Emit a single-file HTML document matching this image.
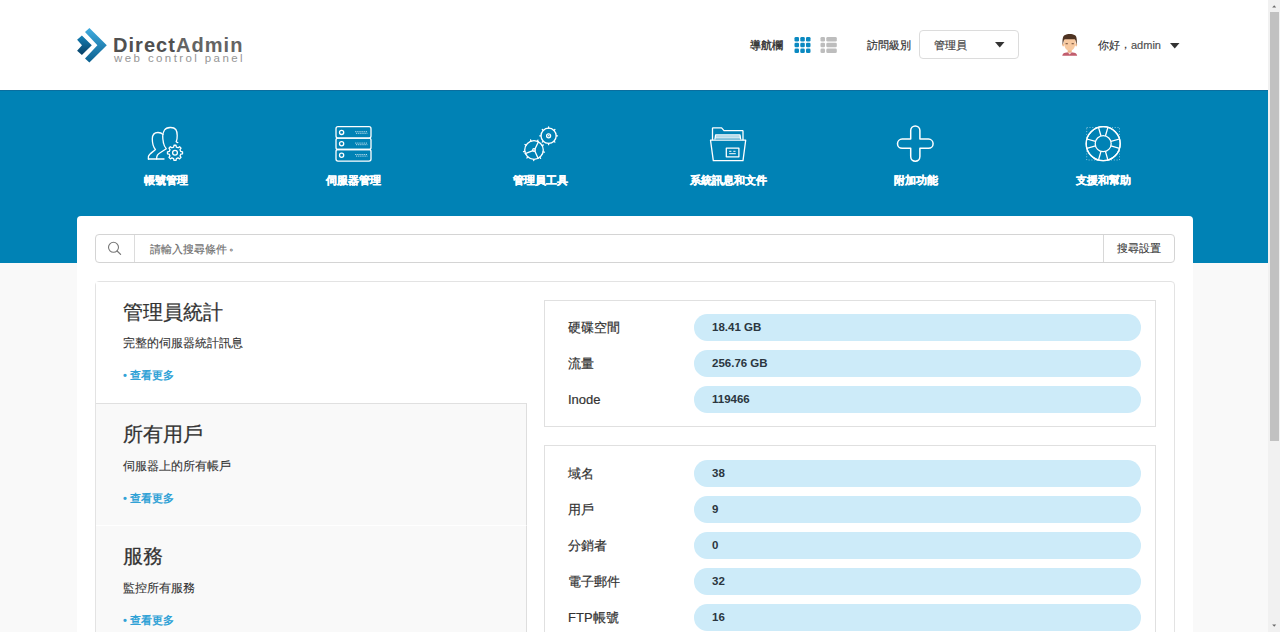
<!DOCTYPE html>
<html><head><meta charset="utf-8">
<style>
*{box-sizing:border-box;margin:0;padding:0}
html,body{width:1280px;height:632px;overflow:hidden}
body{font-family:"Liberation Sans",sans-serif;background:#f9f9f9;position:relative;color:#333}
.a{position:absolute;white-space:nowrap}
#header{position:absolute;left:0;top:0;width:1268px;height:90px;background:#fff}
#blue{position:absolute;left:0;top:90px;width:1268px;height:173px;background:#0082b5}
#track{position:absolute;left:1268px;top:0;width:12px;height:632px;background:#f1f1f1}
#thumb{position:absolute;left:1270px;top:11.5px;width:8.6px;height:429px;background:#c1c1c1}
.ico{position:absolute;top:118px;width:50px;height:50px}
.ico svg{display:block}
.nl{position:absolute;top:173px;width:180px;margin-left:-90px;text-align:center;color:#fff;font-weight:bold;font-size:11px;line-height:14px;-webkit-text-stroke:0.3px #fff}
#card{position:absolute;left:77px;top:216px;width:1116px;height:430px;background:#fff;border-radius:4px}
#search{position:absolute;left:95px;top:234px;width:1080px;height:29px;border:1px solid #d4d4d4;border-radius:4px;background:#fff}
#stats{position:absolute;left:95px;top:281px;width:1080px;height:400px;border:1px solid #e3e3e3;border-radius:4px;background:#fff}
.sec{position:absolute;left:96px;width:431px}
.sec h2{position:absolute;left:26.5px;font-size:20px;font-weight:normal;color:#333;line-height:24px;white-space:nowrap;-webkit-text-stroke:0.25px #333}
.sec p{position:absolute;left:26.5px;font-size:12px;color:#333;line-height:14px;white-space:nowrap;-webkit-text-stroke:0.1px #333}
.sec a{position:absolute;left:27px;font-size:11px;color:#31a2d6;font-weight:bold;text-decoration:none;line-height:14px;white-space:nowrap}
.box{position:absolute;left:544px;width:612px;border:1px solid #e0e0e0;background:#fff}
.k{position:absolute;left:568px;margin-top:1px;font-size:13px;color:#333;line-height:26px;white-space:nowrap;-webkit-text-stroke:0.2px #333}
.v{position:absolute;left:694px;width:446.6px;height:26.5px;margin-top:0.3px;border-radius:13.25px;background:#cdebf9;line-height:26.5px;padding-left:18px;font-size:11.5px;font-weight:bold;color:#2b3640;white-space:nowrap}
</style></head><body>
<div id="header"></div>
<div id="blue"></div><div class="a" style="left:0;top:90px;width:1268px;height:1px;background:#0a6e9f"></div>
<div id="track"></div><div id="thumb"></div>
<svg class="a" style="left:1268px;top:0" width="12" height="632"><path d="M4.2 7.5L6.2 5.3L8.2 7.5Z" fill="#6a6a6a"/><path d="M4.2 624.5L6.2 626.7L8.2 624.5Z" fill="#6a6a6a"/></svg>

<!-- logo -->
<svg class="a" style="left:70px;top:20px" width="45" height="50" viewBox="0 0 45 50">
  <defs>
    <linearGradient id="g1" x1="0" y1="0" x2="0" y2="1"><stop offset="0" stop-color="#41ade0"/><stop offset="1" stop-color="#0b5f8e"/></linearGradient>
    <linearGradient id="g2" x1="0" y1="0" x2="0" y2="1"><stop offset="0" stop-color="#1582b8"/><stop offset="1" stop-color="#083f64"/></linearGradient>
  </defs>
  <path d="M19.4 8 L36.8 25.2 L19.4 42.6 L15 38.6 L27.4 25.2 L15 11.9 Z" fill="url(#g1)"/>
  <path d="M11.9 15.4 L21.8 25.2 L11.9 35.1 L7.1 30.8 L12 25.2 L7.1 19.8 Z" fill="url(#g2)"/>
</svg>
<div class="a" style="left:113px;top:33px;font-size:20px;font-weight:bold;color:#505050;line-height:24px;letter-spacing:1.05px">Direct<span style="color:#646464">Admin</span></div>
<div class="a" style="left:114px;top:52px;font-size:11.5px;color:#969696;line-height:13px;letter-spacing:2.4px">web control panel</div>

<!-- header right -->
<div class="a" style="left:750px;top:38px;font-size:11px;color:#333;line-height:14px;-webkit-text-stroke:0.4px #333">導航欄</div>
<svg class="a" style="left:794px;top:37px" width="18" height="17">
  <g fill="#0a89c1">
    <rect x="0.5" y="0" width="4.5" height="4.5" rx="1.3"/><rect x="6.3" y="0" width="4.5" height="4.5" rx="1.3"/><rect x="12" y="0" width="4.5" height="4.5" rx="1.3"/>
    <rect x="0.5" y="5.8" width="4.5" height="4.5" rx="1.3"/><rect x="6.3" y="5.8" width="4.5" height="4.5" rx="1.3"/><rect x="12" y="5.8" width="4.5" height="4.5" rx="1.3"/>
    <rect x="0.5" y="11.6" width="4.5" height="4.5" rx="1.3"/><rect x="6.3" y="11.6" width="4.5" height="4.5" rx="1.3"/><rect x="12" y="11.6" width="4.5" height="4.5" rx="1.3"/>
  </g>
</svg>
<svg class="a" style="left:820px;top:37px" width="18" height="17">
  <g fill="#bdbdbd">
    <rect x="0.5" y="0" width="4.5" height="4.5" rx="1.3"/><rect x="6.3" y="0" width="10.5" height="4.5" rx="1.3"/>
    <rect x="0.5" y="5.8" width="4.5" height="4.5" rx="1.3"/><rect x="6.3" y="5.8" width="10.5" height="4.5" rx="1.3"/>
    <rect x="0.5" y="11.6" width="4.5" height="4.5" rx="1.3"/><rect x="6.3" y="11.6" width="10.5" height="4.5" rx="1.3"/>
  </g>
</svg>
<div class="a" style="left:867px;top:38px;font-size:11px;color:#333;line-height:14px;-webkit-text-stroke:0.2px #333">訪問級別</div>
<div class="a" style="left:919px;top:30px;width:100px;height:29px;border:1px solid #dcdcdc;border-radius:4px;background:#fff"></div>
<div class="a" style="left:934px;top:38px;font-size:11px;color:#444;line-height:14px;-webkit-text-stroke:0.2px #444">管理員</div>
<svg class="a" style="left:995px;top:42px" width="10" height="6"><path d="M0 0H9.5L4.75 5.5Z" fill="#333"/></svg>

<!-- avatar -->
<svg class="a" style="left:1058px;top:32px" width="24" height="26" viewBox="0 0 24 26">
  <path d="M4.3 23.8 C4.3 21.3 7 20.2 11.7 20.2 C16.4 20.2 19.1 21.3 19.1 23.8 Z" fill="#c25d6d"/>
  <path d="M9.6 20.2 L11.7 22.6 L13.8 20.2 Z" fill="#f4e6e6"/>
  <rect x="9.7" y="17.5" width="4" height="3" fill="#eeb48a"/>
  <ellipse cx="5.2" cy="12.8" rx="1" ry="1.6" fill="#f2bd92"/><ellipse cx="18.2" cy="12.8" rx="1" ry="1.6" fill="#f2bd92"/>
  <path d="M5.6 6.5 C5.6 15.5 8 18.6 11.7 18.6 C15.4 18.6 17.8 15.5 17.8 6.5 Z" fill="#f7c9a0"/>
  <path d="M4.7 13 C4.3 8 4.6 4.5 6.5 3.3 C8 2.2 10 2 11.7 2 C13.4 2 15.6 2.2 17 3.3 C18.8 4.5 19.1 8 18.7 13 L17.8 9.2 C17.5 7.6 17 7.2 16 7.2 L7.4 7.2 C6.4 7.2 5.9 7.6 5.6 9.2 Z" fill="#4e3322"/>
  <rect x="7.6" y="11.3" width="2.2" height="0.9" fill="#5a3a28"/><rect x="13.6" y="11.3" width="2.2" height="0.9" fill="#5a3a28"/>
</svg>
<div class="a" style="left:1098px;top:38px;font-size:11px;color:#333;line-height:14px;-webkit-text-stroke:0.15px #333">你好<span style="position:relative;top:-1.5px">，</span><span style="color:#555">admin</span></div>
<svg class="a" style="left:1170px;top:43px" width="10" height="6"><path d="M0 0H9.5L4.75 5.5Z" fill="#333"/></svg>

<!-- nav icons -->
<div class="ico" style="left:140px"><svg width="50" height="50" viewBox="0 0 50 50" fill="none" stroke="#fff" stroke-width="1.3" stroke-linejoin="round" stroke-linecap="round">
  <path d="M23.5 25 C22.6 21 22.6 15 24.5 12 C26.5 9 33.5 8.5 35.8 11.5 C37.6 14 37.6 21 36.2 23.6 C36.6 24.2 37.2 24.4 37.8 24.6"/>
  <path d="M23.5 25 C24 28 25.5 29.8 26.3 30.8 L20.5 34.5 C17.5 36.5 16.6 37.5 16.6 41"/>
  <path d="M8.4 41 L8.4 38.6 C9 36 12 34.5 15.5 31.6 C13.2 29 12.3 26 12.3 21 C12.3 16.2 15 14.5 18 14.5 C20.5 14.5 22 15.4 22.9 16.4"/>
  <path d="M8.4 41 L24 41"/>
  <path d="M33.62 29.06 L33.99 27.27 L36.01 27.27 L36.38 29.06 L38.08 29.77 L39.61 28.76 L41.04 30.19 L40.03 31.72 L40.74 33.42 L42.53 33.79 L42.53 35.81 L40.74 36.18 L40.03 37.88 L41.04 39.41 L39.61 40.84 L38.08 39.83 L36.38 40.54 L36.01 42.33 L33.99 42.33 L33.62 40.54 L31.92 39.83 L30.39 40.84 L28.96 39.41 L29.97 37.88 L29.26 36.18 L27.47 35.81 L27.47 33.79 L29.26 33.42 L29.97 31.72 L28.96 30.19 L30.39 28.76 L31.92 29.77Z"/>
  <circle cx="35" cy="34.8" r="2.4"/>
</svg></div>
<div class="ico" style="left:328px"><svg width="50" height="50" viewBox="0 0 50 50" fill="none" stroke="#fff" stroke-width="1.3">
  <rect x="8" y="8.7" width="35" height="11.4" rx="2"/>
  <rect x="8" y="20.1" width="35" height="11.4" rx="2"/>
  <rect x="8" y="31.5" width="35" height="11.6" rx="2"/>
  <circle cx="13.6" cy="14.4" r="2.1"/><circle cx="13.6" cy="25.8" r="2.1"/><circle cx="13.6" cy="37.2" r="2.1"/>
  <g stroke-width="0.9" stroke-dasharray="1 1.1">
  <path d="M27.3 13.7H39.3M28.2 15.3H39.3M27.3 25.1H39.3M28.2 26.7H39.3M27.3 36.5H39.3M28.2 38.1H39.3"/>
  </g>
</svg></div>
<div class="ico" style="left:515px"><svg width="50" height="50" viewBox="0 0 50 50" fill="none" stroke="#fff" stroke-width="1.3" stroke-linecap="round">
  <circle cx="19" cy="32" r="9.3"/>
  <circle cx="19" cy="32" r="1.3"/>
  <path d="M20 31 L23.4 23.8 M18 32.6 L10.2 35.6 M19.8 33 L23.2 40.4"/>
  <path d="M28.11 33.85L29.39 34.11M24.79 39.27L25.60 40.29M18.76 41.30L18.73 42.60M12.84 38.97L11.98 39.94M9.80 33.38L8.52 33.57M11.07 27.15L9.96 26.47M16.04 23.18L15.63 21.95M22.40 23.34L22.88 22.13M27.17 27.56L28.31 26.94"/>
  <circle cx="33.6" cy="17.8" r="7.6"/>
  <circle cx="33.6" cy="17.8" r="2"/>
  <circle cx="33.6" cy="17.8" r="0.3" fill="#fff" stroke-width="0.8"/>
  <path d="M41.20 17.80L42.50 17.80M38.97 23.17L39.89 24.09M33.60 25.40L33.60 26.70M28.23 23.17L27.31 24.09M26.00 17.80L24.70 17.80M28.23 12.43L27.31 11.51M33.60 10.20L33.60 8.90M38.97 12.43L39.89 11.51"/>
</svg></div>
<div class="ico" style="left:703px"><svg width="50" height="50" viewBox="0 0 50 50" fill="none" stroke="#fff" stroke-width="1.3" stroke-linejoin="round">
  <path d="M9.5 22.2 V10.3 Q9.5 9.9 10 9.9 H18.6 L21 12.7 H39.6 Q40 12.7 40 13.2 V22.2"/>
  <path d="M11.9 21.5 L12.6 17 H37 L37.7 21.5" />
  <path d="M12.3 19.4 H37.3" stroke-width="2.6" opacity="0.8"/>
  <path d="M7.5 22.2 H42.7 L40 42.7 H10.3 Z"/>
  <rect x="23.3" y="30.2" width="12.6" height="8.6"/>
  <path d="M26.2 33.3 H28.4 M30.3 33.3 H32.5 M26.2 35.7 H32.8" stroke-width="1"/>
</svg></div>
<div class="ico" style="left:890px"><svg width="50" height="50" viewBox="0 0 50 50" fill="none" stroke="#fff" stroke-width="1.5" stroke-linejoin="round">
  <path d="M20.7 21.1 V12.6 A4.6 4.6 0 0 1 29.9 12.6 V21.1 H38.5 A4.6 4.6 0 0 1 38.5 30.3 H29.9 V38.6 A4.6 4.6 0 0 1 20.7 38.6 V30.3 H12.1 A4.6 4.6 0 0 1 12.1 21.1 Z"/>
</svg></div>
<div class="ico" style="left:1078px"><svg width="50" height="50" viewBox="0 0 50 50" fill="none" stroke="#fff" stroke-width="1.3">
  <rect x="8.7" y="9.5" width="32.8" height="32.5" stroke-width="0.9" stroke-dasharray="1 1.8" opacity="0.6"/>
  <circle cx="25.2" cy="25.7" r="17" fill="#0082b5"/>
  <circle cx="25.2" cy="25.7" r="17"/>
  <circle cx="25.2" cy="25.7" r="8"/>
  <path d="M32.89 23.49L41.54 21.00M32.89 27.91L41.54 30.40M27.41 33.39L29.90 42.04M22.99 33.39L20.50 42.04M17.51 27.91L8.86 30.40M17.51 23.49L8.86 21.00M22.99 18.01L20.50 9.36M27.41 18.01L29.90 9.36"/>
</svg></div>
<div class="nl" style="left:165.5px">帳號管理</div>
<div class="nl" style="left:353px">伺服器管理</div>
<div class="nl" style="left:540.5px">管理員工具</div>
<div class="nl" style="left:728px">系統訊息和文件</div>
<div class="nl" style="left:915.5px">附加功能</div>
<div class="nl" style="left:1103px">支援和幫助</div>

<div id="card"></div>
<div id="search"></div>
<div class="a" style="left:134px;top:235px;width:1px;height:27px;background:#dcdcdc"></div>
<div class="a" style="left:1103px;top:235px;width:1px;height:27px;background:#d8d8d8"></div>
<svg class="a" style="left:106px;top:240px" width="18" height="18"><circle cx="7.5" cy="7.3" r="5" fill="none" stroke="#777" stroke-width="1.1"/><path d="M11.1 11 L14.6 14.4" stroke="#777" stroke-width="1.2" stroke-linecap="round"/></svg>
<div class="a" style="left:150px;top:242px;font-size:11px;color:#6e6e6e;line-height:14px;-webkit-text-stroke:0.15px #6e6e6e">請輸入搜尋條件<span style="position:relative;top:-3px;left:2px">。</span></div>
<div class="a" style="left:1117px;top:241px;font-size:11px;color:#3a3a3a;line-height:14px;-webkit-text-stroke:0.1px #3a3a3a">搜尋設置</div>

<div id="stats"></div>

<div class="sec" style="top:282px;height:121px;background:#fff">
  <h2 style="top:18px">管理員統計</h2>
  <p style="top:54px">完整的伺服器統計訊息</p>
  <a style="top:86px">• 查看更多</a>
</div>
<div class="sec" style="top:403px;height:122px;background:#f9f9f9;border-top:1px solid #e0e0e0;border-right:1px solid #dedede">
  <h2 style="top:18px">所有用戶</h2>
  <p style="top:55px">伺服器上的所有帳戶</p>
  <a style="top:87px">• 查看更多</a>
</div>
<div class="sec" style="top:525px;height:122px;background:#f9f9f9;border-top:1px solid #fff;border-right:1px solid #dedede">
  <h2 style="top:18px">服務</h2>
  <p style="top:55px">監控所有服務</p>
  <a style="top:87px">• 查看更多</a>
</div>

<div class="box" style="top:300px;height:127px"></div>
<div class="k" style="top:314px">硬碟空間</div><div class="v" style="top:314px">18.41 GB</div>
<div class="k" style="top:350px">流量</div><div class="v" style="top:350px">256.76 GB</div>
<div class="k" style="top:386px">Inode</div><div class="v" style="top:386px">119466</div>

<div class="box" style="top:445px;height:220px"></div>
<div class="k" style="top:460px">域名</div><div class="v" style="top:460px">38</div>
<div class="k" style="top:496px">用戶</div><div class="v" style="top:496px">9</div>
<div class="k" style="top:532px">分銷者</div><div class="v" style="top:532px">0</div>
<div class="k" style="top:568px">電子郵件</div><div class="v" style="top:568px">32</div>
<div class="k" style="top:604px">FTP帳號</div><div class="v" style="top:604px">16</div>

</body></html>
